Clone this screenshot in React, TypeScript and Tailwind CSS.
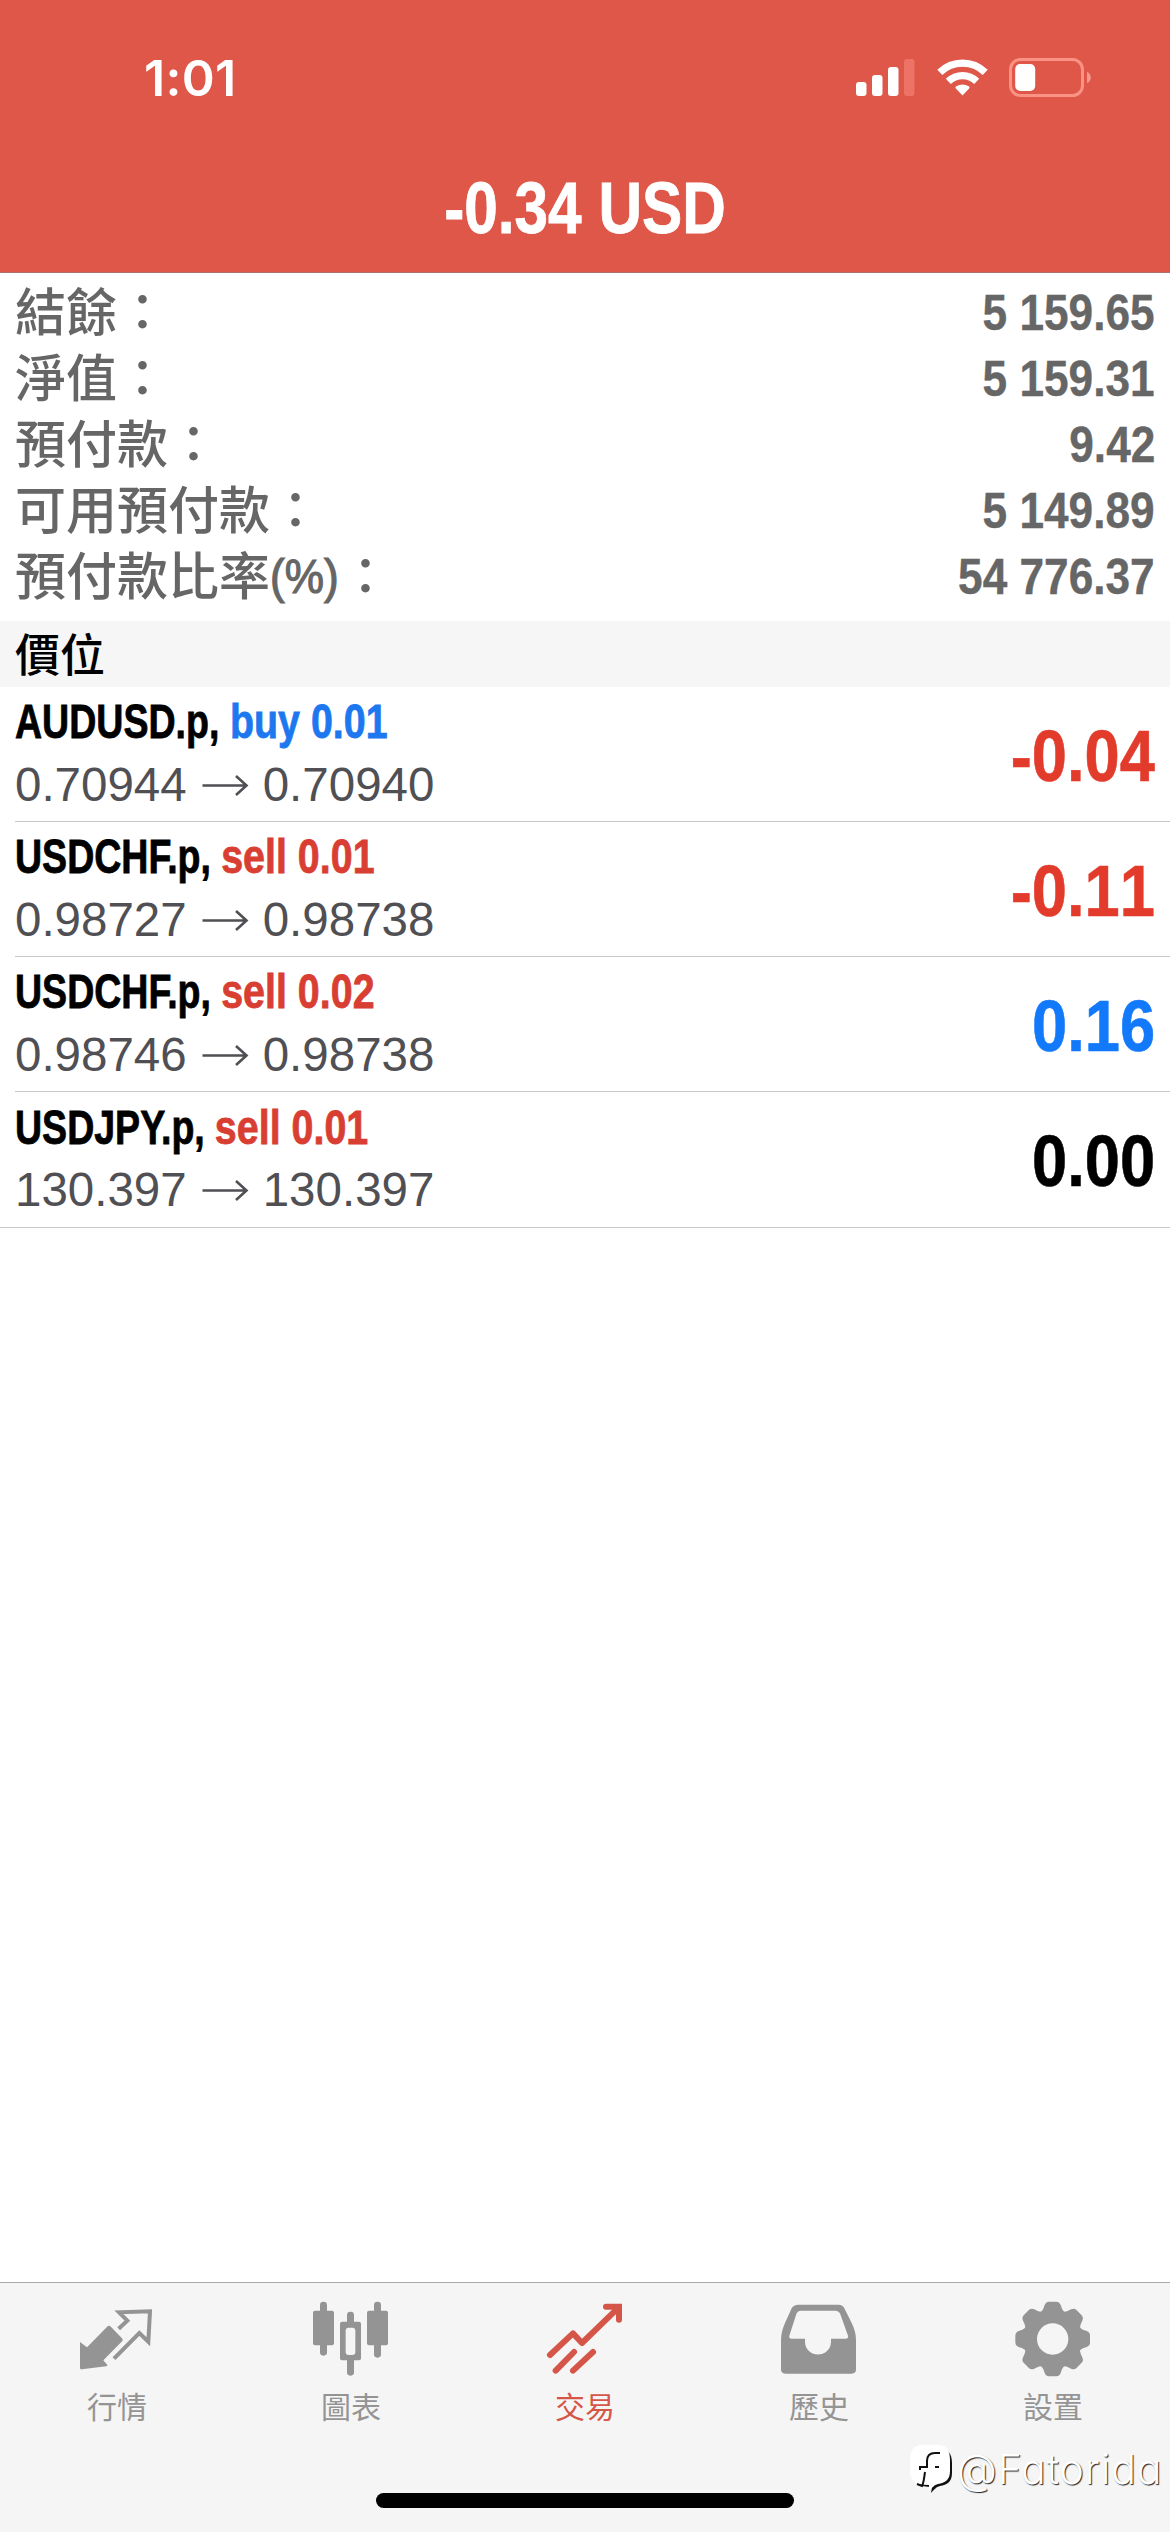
import type { ReactNode } from "react";
import clsx from "clsx";

const balances = [
  { label: "結餘：", value: "5 159.65" },
  { label: "淨值：", value: "5 159.31" },
  { label: "預付款：", value: "9.42" },
  { label: "可用預付款：", value: "5 149.89" },
  { label: "預付款比率", suffix: "(%)", value: "54 776.37" },
];

const positions = [
  { symbol: "AUDUSD.p", side: "buy", volume: "0.01", open: "0.70944", current: "0.70940", profit: "-0.04" },
  { symbol: "USDCHF.p", side: "sell", volume: "0.01", open: "0.98727", current: "0.98738", profit: "-0.11" },
  { symbol: "USDCHF.p", side: "sell", volume: "0.02", open: "0.98746", current: "0.98738", profit: "0.16" },
  { symbol: "USDJPY.p", side: "sell", volume: "0.01", open: "130.397", current: "130.397", profit: "0.00" },
];

const profitColor = (profit: string) => {
  const n = Number(profit);
  if (n < 0) return "text-[#e33b2b]";
  if (n > 0) return "text-[#1279fb]";
  return "text-black";
};

const StatusBar = () => (
  <div className="flex h-[156px] items-start justify-between pl-[144px] pr-[77px] pt-[58px] text-white">
    <span className="font-['Inter',sans-serif] text-[50px] font-semibold leading-[40px] tracking-[0.3px]">1:01</span>
    <div className="flex items-start">
      <svg width="59" height="40" viewBox="0 0 59 40" fill="currentColor">
        <rect x="0" y="24" width="10.5" height="14" rx="3" />
        <rect x="16" y="17" width="10.5" height="21" rx="3" />
        <rect x="32" y="9" width="10.5" height="29" rx="3" />
        <rect x="48" y="1" width="10.5" height="37" rx="3" fill="#ee7367" />
      </svg>
      <svg className="ml-[22px]" width="51" height="40" viewBox="0 0 51 40" fill="none" stroke="currentColor" strokeWidth="7.2">
        <path d="M2.8 14.4a32.5 32.5 0 0 1 45.4 0" />
        <path d="M11.3 23.4a20.3 20.3 0 0 1 28.4 0" />
        <path d="M25.5 37.4l-6.6-7c-.7-.8-.6-1.6.3-2.1a12.8 12.8 0 0 1 12.6 0c.9.5 1 1.3.3 2.1z" fill="currentColor" stroke="none" />
      </svg>
      <svg className="ml-[21px]" width="84" height="40" viewBox="0 0 84 40">
        <rect x="1.5" y="1.5" width="72" height="36" rx="10" fill="none" stroke="#fb9385" strokeWidth="3" />
        <rect x="6.2" y="6" width="20" height="27" rx="5" fill="#fff" />
        <path d="M78 14c5 1.5 5 9.500 0 11z" fill="#f59a8f" />
      </svg>
    </div>
  </div>
);

const Arrow = () => (
  <svg className="mx-[14px]" width="48" height="34" viewBox="0 0 48 34" fill="none" stroke="currentColor" strokeWidth="2.6">
    <path d="M1.500 17.500h44M35 8l10.500 9.500-10.500 9.500" />
  </svg>
);

const Icon = ({ children }: { children: ReactNode }) => (
  <svg width="80" height="80" viewBox="0 0 240 240" fill="currentColor">
    {children}
  </svg>
);

const QuotesIcon = () => (
  <Icon>
    <path d="M9 132l21 16 62-63q4-3 8 0l35 36q4 4 1 8l-57 58 12 14q1 4-4 4l-72 9q-6 1-6-5z" />
    <path d="M125 92l26-24-25-25 93-3-5 91-27-26-76 77" fill="none" stroke="currentColor" strokeWidth="12" />
  </Icon>
);

const ChartIcon = () => (
  <Icon>
    <rect x="27" y="11" width="21" height="162" rx="10" />
    <rect x="6" y="38" width="63" height="104" rx="6" />
    <rect x="108" y="41" width="21" height="192" rx="10" />
    <rect x="87" y="71" width="63" height="116" rx="6" />
    <rect x="104" y="89" width="29" height="82" rx="9" fill="#f5f5f5" />
    <rect x="189" y="11" width="21" height="168" rx="10" />
    <rect x="168" y="38" width="63" height="104" rx="6" />
  </Icon>
);

const TradeIcon = () => (
  <Icon>
    <g fill="none" stroke="currentColor" strokeWidth="18" strokeLinecap="round">
      <path d="M15 171l69-65 27 29 107-104" strokeLinejoin="round" />
      <path d="M183 26h39v39" />
      <path d="M32 218l55-56M84 218l60-56" />
    </g>
    <path d="M200 30h31v30z" />
  </Icon>
);

const HistoryIcon = () => (
  <Icon>
    <path
      fillRule="evenodd"
      d="M58 20h121q12 0 17 11l22 44q13 26 13 52v87q0 13-13 13H19q-13 0-13-13v-87q0-26 12-52l20-44q6-11 20-11zM66 38q-10 0-14 10L31 113q-2 9 7 9h40v10c2 50 76 50 78 0v-10h44q9 0 7-9l-23-64q-4-11-15-11z"
    />
  </Icon>
);

const teeth = [0, 45, 90, 135, 180, 225, 270, 315];

const SettingsIcon = () => (
  <Icon>
    {teeth.map((angle) => (
      <path
        key={angle}
        transform={`rotate(${angle} 119 123)`}
        d="M78 45Q88 41 91 32L95 21Q99 11 108 11H130Q139 11 143 21L147 32Q150 41 160 45V90H78z"
      />
    ))}
    <circle cx="119" cy="123" r="82" />
    <circle cx="119" cy="123" r="47" fill="#f5f5f5" />
  </Icon>
);

const tabs = [
  { label: "行情", icon: <QuotesIcon /> },
  { label: "圖表", icon: <ChartIcon /> },
  { label: "交易", icon: <TradeIcon />, active: true },
  { label: "歷史", icon: <HistoryIcon /> },
  { label: "設置", icon: <SettingsIcon /> },
];

const Watermark = () => (
  <div className="absolute bottom-[37px] right-[7px] flex items-center text-white">
    <svg width="46" height="52" viewBox="0 0 46 52">
      <path
        d="M14 4h14c9 0 13 6 13 15v10c0 9-5 12-12 13-4 1-5 3-9 7l1-6C8 43 4 39 4 29V19C4 9 7 4 14 4z"
        fill="#111"
        transform="translate(2 1)"
      />
      <path d="M13 2h16c9 0 12 6 12 15v11c0 9-5 12-12 13-4 1-5 3-9 7l0-6C6 42 1 38 1 28V17C1 7 5 2 13 2z" fill="#fff" />
      <path d="M31 10h-5c-5 0-8 3-8 8v6h-7v3M16 29c-1 6-1 10-3 14l-5-2" fill="none" stroke="#111" strokeWidth="2" />
      <path d="M26 24h4" stroke="#111" strokeWidth="2" />
    </svg>
    <span className="ml-[2px] w-[206px] font-['Inter',sans-serif] text-[41px] font-light leading-[52px] tracking-[0.9px] [font-feature-settings:'cv11'] [text-shadow:1px_1px_1px_#222]">
      @Fatorida
    </span>
  </div>
);

const App = () => {
  return (
    <div className="flex h-[2532px] w-[1170px] flex-col overflow-hidden bg-white font-['Liberation_Sans','Noto_Sans_CJK_TC',sans-serif]">
      <header className="h-[273px] shrink-0 border-b border-[#a8736c] bg-[#de5748]">
        <StatusBar />
        <h1 className="scale-x-[0.838] text-center text-[72px] font-bold leading-[104px] text-white [-webkit-text-stroke:0.8px]">
          -0.34 USD
        </h1>
      </header>

      {/* Account summary */}
      <section className="h-[348px] shrink-0 px-[15px] pt-[7px] text-[#666]">
        {balances.map((row) => (
          <div key={row.label} className="flex h-[66px] items-center justify-between">
            <span className="flex items-center pb-[7px] font-['Noto_Sans_CJK_TC',sans-serif] text-[51px] font-medium leading-[59px]">
              {row.label}
              {row.suffix && (
                <>
                  <span className="w-[70px] origin-left scale-x-[0.9] pt-[5px] font-['Liberation_Sans',sans-serif] text-[49px] [-webkit-text-stroke:1.2px]">
                    {row.suffix}
                  </span>
                  <span>：</span>
                </>
              )}
            </span>
            <span className="origin-right scale-x-[0.875] text-[50.5px] font-bold leading-[66px] [-webkit-text-stroke:0.4px]">
              {row.value}
            </span>
          </div>
        ))}
      </section>

      <div className="h-[66px] shrink-0 bg-[#f6f6f6] px-[15px] font-['Noto_Sans_CJK_TC',sans-serif] text-[45px] font-medium leading-[63px] text-black">
        價位
      </div>

      {/* Open positions */}
      <ul className="shrink-0 border-b border-[#c8c8c8]">
        {positions.map((p, i) => (
          <li key={i} className="pl-[15px]">
            <div
              className={clsx(
                "flex h-[135px] items-center justify-between pr-[15px]",
                i < positions.length - 1 && "border-b border-[#c8c8c8]",
              )}
            >
              <div>
                <div className="origin-left scale-x-[0.79] whitespace-pre pb-[3px] text-[47.5px] font-bold leading-[60px] text-black [-webkit-text-stroke:0.8px]">
                  {p.symbol},{" "}
                  <span
                    className={clsx(
                      "inline-block origin-left scale-x-[1.05]",
                      p.side === "buy" ? "text-[#1d78f0]" : "text-[#d93e33]",
                    )}
                  >
                    {p.side} {p.volume}
                  </span>
                </div>
                <div className="flex h-[61px] items-center pb-[2px] font-['Liberation_Sans',sans-serif] text-[47.5px] text-[#505054]">
                  {p.open}
                  <Arrow />
                  {p.current}
                </div>
              </div>
              <span
                className={clsx(
                  "origin-right scale-x-[0.885] pt-[5px] text-[71.500px] font-bold [-webkit-text-stroke:0.6px] [font-kerning:none]",
                  profitColor(p.profit),
                )}
              >
                {p.profit}
              </span>
            </div>
          </li>
        ))}
      </ul>

      <nav className="relative mt-auto flex h-[250px] shrink-0 flex-col items-center border-t border-[#a9a9a9] bg-[#f5f5f5]">
        <div className="grid w-full grid-cols-5">
          {tabs.map((tab) => (
            <div
              key={tab.label}
              className={clsx("flex flex-col items-center pt-[15px]", tab.active ? "text-[#d65549]" : "text-[#949494]")}
            >
              {tab.icon}
              <span className="mt-[5px] font-['Noto_Sans_CJK_TC',sans-serif] text-[30px] leading-[44px]">{tab.label}</span>
            </div>
          ))}
        </div>
        <div className="mb-[24px] mt-auto h-[15px] w-[418px] rounded-full bg-black" />
        <Watermark />
      </nav>
    </div>
  );
};

export default App;
